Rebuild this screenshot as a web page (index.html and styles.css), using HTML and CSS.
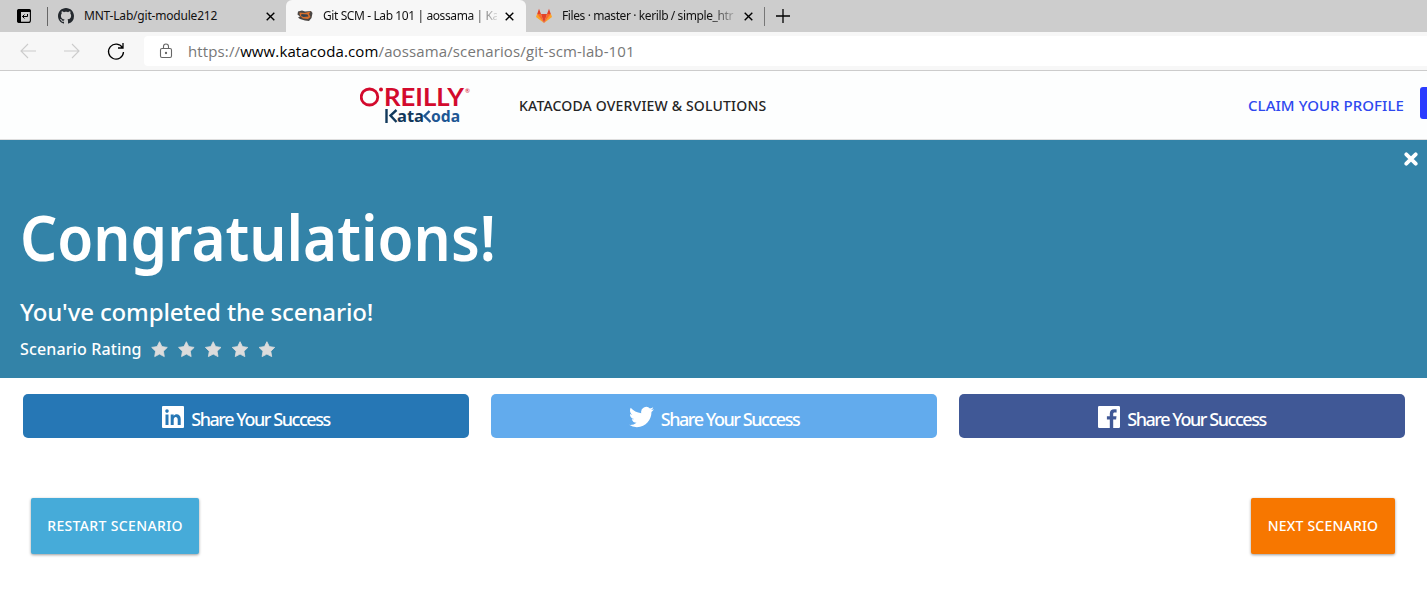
FILE: index.html
```html
<!DOCTYPE html>
<html lang="en">
<head>
<meta charset="utf-8">
<title>Git SCM - Lab 101</title>
<link rel="stylesheet" href="styles.css">
</head>
<body>
<div class="tabs">
  <div class="tab-actions"><svg width="16" height="16" viewBox="0 0 16 16"><rect x="1.6" y="1.6" width="12.8" height="12.8" rx="2" fill="none" stroke="#000" stroke-width="1.100"/><path d="M1 3a2 2 0 0 1 2-2h10a2 2 0 0 1 2 2v1H5v11H3a2 2 0 0 1-2-2z"/><path d="M11.500 6v2.500H6.500M8.500 6.500l-2 2 2 2" fill="none" stroke="#000"/></svg></div>
  <div class="tab tab-first">
    <svg class="fav" width="16" height="16" viewBox="0 0 16 16"><path fill="#24292e" d="M8 0C3.580 0 0 3.580 0 8c0 3.540 2.290 6.530 5.470 7.590.4.070.550-.170.550-.380 0-.190-.010-.820-.010-1.490-2.010.370-2.530-.490-2.690-.940-.090-.230-.480-.940-.820-1.130-.280-.150-.680-.520-.010-.530.630-.010 1.080.580 1.230.820.720 1.210 1.870.870 2.330.660.070-.520.280-.870.510-1.070-1.780-.200-3.640-.890-3.640-3.950 0-.870.310-1.590.820-2.150-.080-.200-.360-1.020.080-2.120 0 0 .670-.210 2.200.820.640-.180 1.320-.270 2-.270s1.360.090 2 .270c1.530-1.040 2.200-.820 2.200-.820.440 1.100.160 1.920.080 2.120.510.560.820 1.270.820 2.150 0 3.070-1.870 3.750-3.650 3.950.290.250.540.730.540 1.480 0 1.070-.010 1.930-.010 2.200 0 .210.150.460.550.380A8.010 8.010 0 0 0 16 8c0-4.420-3.580-8-8-8z"/></svg>
    <span class="tab-title t1">MNT-Lab/git-module212</span>
    <svg class="close" width="9" height="9" viewBox="0 0 9 9"><path d="M.7.7l7.600 7.600M8.300.7L.7 8.300"/></svg>
  </div>
  <div class="tab tab-active">
    <svg class="fav" width="16" height="16" viewBox="0 0 16 16"><path fill="#4a4644" d="M1 3.500l4-1 3 1 6-.5 1.500 2-1 5-2.500 3-4-.5-5-1.500-2-1.500 2-1-2.500-2z"/><path fill="#d9702c" d="M2.500 4.500l5 .5 6-1.500-1.500 2.500L13.500 9l-2.500 2-5-.5L3 8z"/><path fill="#37424d" d="M4.500 6l6 .5 1 2-5 .5-2.500-1z"/></svg>
    <span class="tab-title t2">Git SCM - Lab 101 | aossama | Ka</span>
    <svg class="close" width="9" height="9" viewBox="0 0 9 9"><path d="M.7.7l7.600 7.600M8.300.7L.7 8.300"/></svg>
  </div>
  <div class="tab tab-last">
    <svg class="fav" width="16" height="16" viewBox="0 0 16 16"><path fill="#fca326" d="M0 9l1.200-3.500L8 15zM16 9l-1.200-3.500L8 15z"/><path fill="#fc6d26" d="M1.200 6H5l3 9zM14.800 6H11l-3 9z"/><path fill="#e24329" d="M1.200 6L3 .8 5 6h6l2-5.200L14.800 6 11 6 8 15 5 6z"/></svg>
    <span class="tab-title t3">Files · master · kerilb / simple_htr</span>
    <svg class="close" width="9" height="9" viewBox="0 0 9 9"><path d="M.7.7l7.600 7.600M8.300.7L.7 8.300"/></svg>
  </div>
  <svg class="plus" width="14" height="14" viewBox="0 0 14 14"><path d="M7 0v14M0 7h14" stroke="#000" stroke-width="1.300"/></svg>
</div>
<div class="toolbar">
  <svg class="nav" width="120" height="20" viewBox="0 0 120 20" fill="none" stroke-width="1.100"><path stroke="#ccc" d="M16 10H1M8 3l-7 7 7 7M44 10h15M52 3l7 7-7 7"/><path stroke="#000" stroke-width="1.300" d="M102.600 7a7.500 7.500 0 1 0 .9 4M103 2v5h-5"/></svg>
  <div class="address">
    <svg width="14" height="16" viewBox="0 0 14 16" fill="none" stroke="#666" stroke-width="1.100"><rect x="1.500" y="5.500" width="11" height="9" rx="1.500"/><path d="M4.500 5.500V3.500a2.500 2.500 0 0 1 5 0v2"/><circle cx="7" cy="10" r=".6" fill="#555"/></svg>
    <span class="url">https://<b>www.katacoda.com</b>/aossama/scenarios/git-scm-lab-101</span>
  </div>
</div>
<header class="site-header">
  <svg class="logo" width="112" height="48" viewBox="0 -3 112 48">
    <ellipse cx="9.500" cy="13" rx="8.300" ry="8" fill="none" stroke="#d30a2d" stroke-width="2.800"/><circle cx="21" cy="5.500" r="2" fill="#d30a2d"/>
    <text class="oreilly" x="24" y="21.500" textLength="80" lengthAdjust="spacingAndGlyphs">REILLY</text>
    <text class="reg" x="105" y="9">®</text>
    <g fill="none" stroke="#12395c" stroke-width="2.400"><path d="M26.500 25v14M36.500 26l-6 5.500 6 6.500"/><path stroke="#205794" d="M69.500 27l-5 5 6 6"/></g>
    <text class="kata" x="37" y="38" textLength="27" lengthAdjust="spacingAndGlyphs">ata</text>
    <text class="kata oda" x="71" y="38" textLength="29" lengthAdjust="spacingAndGlyphs">oda</text>
  </svg>
  <a class="overview">KATACODA OVERVIEW &amp; SOLUTIONS</a>
  <a class="claim">CLAIM YOUR PROFILE</a>
  <span class="cta"></span>
</header>
<section class="banner">
  <svg class="dismiss" width="14" height="14" viewBox="0 0 14 14"><path d="M2.300 2.300l9.400 9.400M11.700 2.300l-9.400 9.400" stroke="#fff" stroke-width="3.800" stroke-linecap="round"/></svg>
  <h1>Congratulations!</h1>
  <h2>You've completed the scenario!</h2>
  <div class="rating"><span class="rating-label">Scenario Rating</span>
    <svg width="125" height="17" viewBox="0 0 125 17"><defs><path id="star" stroke="#dcdcdc" stroke-width=".8" stroke-linejoin="round" d="M8.500.7l2.400 4.900 5.400.8-3.900 3.800.9 5.400-4.800-2.500-4.800 2.500.9-5.400-3.900-3.800 5.400-.8z"/></defs><g fill="#dcdcdc"><use href="#star"/><use href="#star" x="26.850"/><use href="#star" x="53.700"/><use href="#star" x="80.550"/><use href="#star" x="107.400"/></g></svg>
  </div>
</section>
<div class="shares">
  <a class="share linkedin"><svg width="22" height="22" viewBox="0 0 22 22"><path fill="#fff" fill-rule="evenodd" d="M1 0h20a1 1 0 0 1 1 1v20a1 1 0 0 1-1 1H1a1 1 0 0 1-1-1V1a1 1 0 0 1 1-1zM3.500 8.500V19h3V8.500zM5 3.300a1.800 1.800 0 1 0 0 3.600 1.800 1.800 0 0 0 0-3.600zM8.700 8.500V19h3v-5.300c0-3.500 4-3.500 4 0V19h3v-6c0-5.600-5.500-5.800-7-3.100V8.500z"/></svg><span>Share Your Success</span></a>
  <a class="share twitter"><svg width="25" height="22" viewBox="0 2 24 20"><path fill="#fff" d="M23.950 4.570a10 10 0 0 1-2.820.770 4.960 4.960 0 0 0 2.160-2.720c-.950.550-2 .950-3.130 1.180a4.920 4.920 0 0 0-8.380 4.480C7.690 8.090 4.070 6.130 1.640 3.160a4.820 4.820 0 0 0-.670 2.480c0 1.710.870 3.210 2.190 4.100a4.900 4.900 0 0 1-2.230-.620v.060a4.920 4.920 0 0 0 3.950 4.830 5 5 0 0 1-2.210.080 4.940 4.940 0 0 0 4.600 3.420A9.870 9.870 0 0 1 0 19.540a14 14 0 0 0 7.550 2.210c9.050 0 14-7.500 14-13.980 0-.210 0-.420-.020-.630a9.940 9.940 0 0 0 2.420-2.570z"/></svg><span>Share Your Success</span></a>
  <a class="share facebook"><svg width="22" height="22" viewBox="0 0 22 22"><path fill="#fff" d="M1.200 0h19.600A1.200 1.200 0 0 1 22 1.200v19.600a1.200 1.200 0 0 1-1.200 1.200h-5.600v-8.500h2.900l.4-3.300h-3.300V8c0-1 .3-1.600 1.700-1.600h1.700v-3c-.3 0-1.300-.1-2.500-.1-2.600 0-4.300 1.500-4.300 4.400v2.500H8.900v3.300h2.900V22H1.200A1.200 1.200 0 0 1 0 20.800V1.200A1.200 1.200 0 0 1 1.200 0z"/></svg><span>Share Your Success</span></a>
</div>
<div class="actions">
  <a class="btn restart">RESTART SCENARIO</a>
  <a class="btn next">NEXT SCENARIO</a>
</div>
</body>
</html>
```

FILE: styles.css
```css
* { box-sizing: border-box; }
body { margin: 0; width: 1427px; height: 594px; overflow: hidden; background: #fff; font-family: "Noto Sans", sans-serif; white-space: nowrap; }
svg { display: block; flex: none; }
.tabs { height: 32px; display: flex; background: #cdcdcd; }
.tab-actions { width: 48px; height: 32px; padding: 8px 0 0 16px; background: linear-gradient(#666, #666) right 7px / 1px 19px no-repeat; }
.tab { height: 32px; display: flex; align-items: center; }
.tab-first { width: 238px; padding-left: 10px; }
.tab-active { width: 240px; padding-left: 11px; background: #f7f7f7; border-radius: 6px 6px 0 0; }
.tab-last { width: 239px; padding-left: 10px; background: linear-gradient(#777, #777) right 7px / 1px 19px no-repeat; }
.tab-title { margin-left: 10px; width: 175px; overflow: hidden; font-size: 12px; line-height: 18px; color: #111; }
.tab-active .tab-title, .tab-last .tab-title { width: 174px; -webkit-mask-image: linear-gradient(90deg, #000 148px, transparent 178px); mask-image: linear-gradient(90deg, #000 148px, transparent 178px); }
.t1 { letter-spacing: -.2px; }
.t2 { letter-spacing: -.4px; }
.t3 { letter-spacing: -.4px; }
.close { margin-left: 7px; fill: none; stroke: #000; stroke-width: 1.4; }
.tab-active .close, .tab-last .close { margin-left: 8px; }
.plus { margin: 9px 0 0 11px; }
.toolbar { height: 39px; display: flex; background: #f7f7f7; border-bottom: 1px solid #ccc; }
.nav { margin: 9px 0 0 20px; }
.address { margin: 4px 0 0 4px; padding-left: 15px; flex: 1; height: 30px; display: flex; align-items: center; background: #fff; border-radius: 4px 0 0 4px; }
.url { margin-left: 15px; font-family: "Open Sans", sans-serif; font-size: 15px; letter-spacing: .12px; color: #777; }
.url b { font-weight: 400; color: #000; }
.site-header { height: 69px; display: flex; align-items: center; background: #fdfefe; border-bottom: 1px solid #dedede; }
.logo { margin: 0 0 0 360px; }
.oreilly { font: 700 25px Lato, sans-serif; fill: #d30a2d; }
.reg { font: 6px Lato, sans-serif; fill: #d30a2d; }
.kata { font: 700 16px "Noto Sans", sans-serif; fill: #12395c; }
.kata.oda { fill: #205794; }
.overview { margin-left: 47px; width: 701px; font-size: 14px; font-weight: 500; letter-spacing: .18px; color: #252525; }
.claim { margin-left: 28px; width: 172px; font-size: 15px; font-weight: 500; letter-spacing: .05px; color: #2e48ef; }
.cta { width: 7px; height: 32px; margin-top: -5px; background: #2b3cff; border-radius: 3px 0 0 3px; }
.banner { position: relative; height: 238px; padding: 52px 20px 0; background: #3383a8; color: #fff; }
.dismiss { position: absolute; top: 12px; right: 9px; }
h1, h2 { width: max-content; margin: 0; transform-origin: 0 50%; }
h1 { font-size: 64px; font-weight: 600; line-height: 90px; transform: scaleX(.913); }
h2 { margin-top: 11px; font-size: 24px; font-weight: 500; line-height: 38px; letter-spacing: -.14px; }
.rating { display: flex; align-items: center; height: 37px; }
.rating-label { width: 131px; margin-top: -2px; font-size: 16px; font-weight: 500; letter-spacing: .13px; }
.shares { display: flex; gap: 22px; padding: 16px 22px 0 23px; }
.share { flex: 1; height: 44px; padding-top: 2px; display: flex; align-items: center; justify-content: center; gap: 7px; border-radius: 5px; color: #fff; font-size: 18px; font-weight: 500; letter-spacing: -1.45px; }
.share svg { margin-top: -1px; }
.share span { padding-top: 3px; }
.linkedin { background: #2677b5; }
.twitter { background: #62abed; }
.facebook { background: #405896; }
.actions { display: flex; justify-content: space-between; padding: 60px 32px 0 31px; }
.btn { height: 56px; padding-bottom: 2px; display: flex; align-items: center; justify-content: center; color: #fff; font-size: 14px; font-weight: 500; letter-spacing: .35px; border-radius: 2px; box-shadow: 0 1px 3px rgba(0,0,0,.4); }
.restart { width: 168px; background: #46abd9; }
.next { width: 144px; letter-spacing: .2px; background: #f77700; }
```
